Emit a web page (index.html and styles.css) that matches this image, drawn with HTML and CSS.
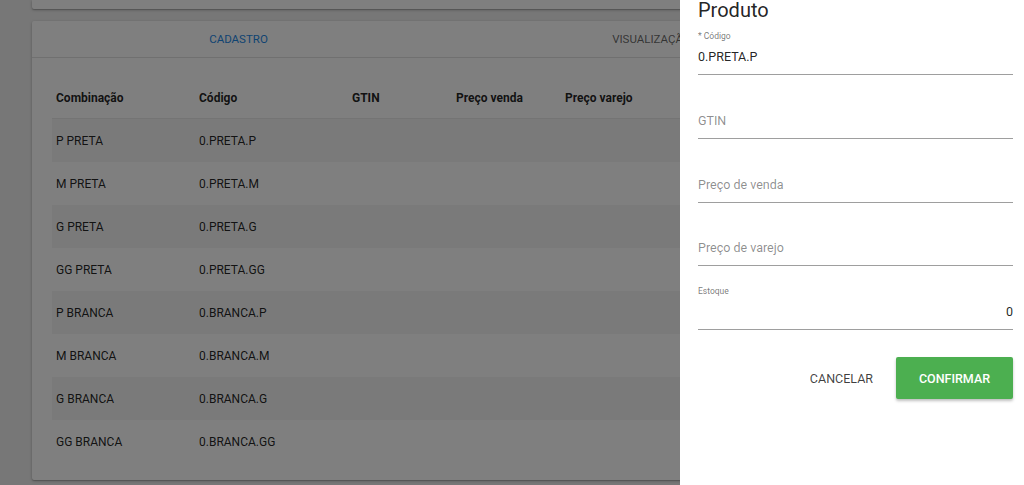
FILE: index.html
```html
<!DOCTYPE html>
<html lang="pt-BR">
<head>
  <meta charset="UTF-8" />
  <meta name="viewport" content="width=device-width, initial-scale=1" />
  <title>Produto - Grade</title>
  <link rel="stylesheet" href="styles.css">
</head>
<body>

  <div class="page">
    <div class="card card-top"></div>

    <div class="card card-main">
      <div class="tabs">
        <div class="tab active">CADASTRO</div>
        <div class="tab">VISUALIZAÇÃO</div>
      </div>

      <div class="table-wrap">
        <table>
          <colgroup>
            <col style="width:143px">
            <col style="width:153px">
            <col style="width:104px">
            <col style="width:109px">
            <col>
          </colgroup>
          <thead>
            <tr>
              <th>Combinação</th>
              <th>Código</th>
              <th>GTIN</th>
              <th>Preço venda</th>
              <th>Preço varejo</th>
            </tr>
          </thead>
          <tbody>
            <tr><td>P PRETA</td><td>0.PRETA.P</td><td></td><td></td><td></td></tr>
            <tr><td>M PRETA</td><td>0.PRETA.M</td><td></td><td></td><td></td></tr>
            <tr><td>G PRETA</td><td>0.PRETA.G</td><td></td><td></td><td></td></tr>
            <tr><td>GG PRETA</td><td>0.PRETA.GG</td><td></td><td></td><td></td></tr>
            <tr><td>P BRANCA</td><td>0.BRANCA.P</td><td></td><td></td><td></td></tr>
            <tr><td>M BRANCA</td><td>0.BRANCA.M</td><td></td><td></td><td></td></tr>
            <tr><td>G BRANCA</td><td>0.BRANCA.G</td><td></td><td></td><td></td></tr>
            <tr><td>GG BRANCA</td><td>0.BRANCA.GG</td><td></td><td></td><td></td></tr>
          </tbody>
        </table>
      </div>
    </div>
  </div>

  <div class="overlay"></div>

  <aside class="drawer">
    <h2>Produto</h2>

    <div class="field first">
      <label>* Código</label>
      <div class="value">0.PRETA.P</div>
    </div>

    <div class="field">
      <div class="value placeholder">GTIN</div>
    </div>

    <div class="field">
      <div class="value placeholder">Preço de venda</div>
    </div>

    <div class="field">
      <div class="value placeholder">Preço de varejo</div>
    </div>

    <div class="field">
      <label>Estoque</label>
      <div class="value number">0</div>
    </div>

    <div class="actions">
      <button class="btn-flat">CANCELAR</button>
      <button class="btn-confirm">CONFIRMAR</button>
    </div>
  </aside>

</body>
</html>
```

FILE: styles.css
```css
body {
  margin: 0;
  padding: 0;
  font-family: Roboto, "Liberation Sans", Arial, sans-serif;
  background-color: #eeeeee;
  color: rgba(0,0,0,0.87);
  overflow: hidden;
}

.page {
  padding: 0 32px;
  height: 485px;
}

.card {
  background: white;
  box-shadow: 0 1px 3px rgba(0,0,0,0.25), 0 1px 1px rgba(0,0,0,0.15);
  border-radius: 2px;
  width: 960px;
}

.card-top {
  height: 9px;
  border-radius: 0 0 2px 2px;
}

.card-main {
  margin-top: 12px;
  padding-bottom: 17px;
}

.tabs {
  display: flex;
  height: 36px;
  border-bottom: 1px solid #e0e0e0;
}

.tab {
  width: 413px;
  text-align: center;
  line-height: 36px;
  font-size: 11.5px;
  color: rgba(0,0,0,0.6);
}

.tab.active {
  color: #1e88e5;
}

.table-wrap {
  padding: 19px 20px 0 20px;
}

table {
  width: 100%;
  border-collapse: collapse;
  table-layout: fixed;
  font-size: 12px;
}

th {
  height: 41px;
  text-align: left;
  font-weight: bold;
  padding: 0 4px;
  border-bottom: 1px solid #e8e8e8;
}

td {
  height: 43px;
  padding: 0 4px;
}

tbody tr:nth-child(odd) {
  background-color: #f5f5f5;
}

.overlay {
  position: fixed;
  top: 0;
  left: 0;
  right: 0;
  bottom: 0;
  background: rgba(0,0,0,0.5);
}

.drawer {
  position: fixed;
  top: 0;
  right: 0;
  width: 344px;
  height: 100%;
  background: white;
  box-sizing: border-box;
  padding: 0 11px 0 18px;
}

.drawer h2 {
  margin: 0;
  font-size: 20px;
  font-weight: 400;
  line-height: 20px;
  color: rgba(0,0,0,0.87);
}

.field {
  height: 63.75px;
  box-sizing: border-box;
  display: flex;
  flex-direction: column;
  justify-content: flex-end;
  border-bottom: 1px solid #9e9e9e;
}

.field.first {
  height: 55px;
}

.field label {
  font-size: 8.5px;
  line-height: 12px;
  color: rgba(0,0,0,0.55);
  margin-bottom: 5px;
}

.field .value {
  font-size: 12.5px;
  line-height: 20px;
  padding-bottom: 7px;
  color: rgba(0,0,0,0.87);
}

.field .placeholder {
  color: rgba(0,0,0,0.45);
}

.field .number {
  text-align: right;
}

.actions {
  display: flex;
  justify-content: flex-end;
  align-items: center;
  gap: 7px;
  margin-top: 27px;
}

button {
  font-family: inherit;
  font-size: 12.5px;
  border: none;
  cursor: pointer;
}

.btn-flat {
  background: none;
  color: rgba(0,0,0,0.75);
  padding: 0 16px;
  height: 42px;
}

.btn-confirm {
  width: 117px;
  height: 42px;
  background-color: #4caf50;
  color: white;
  font-weight: 500;
  border-radius: 2px;
  box-shadow: 0 2px 3px rgba(0,0,0,0.25);
}
```
